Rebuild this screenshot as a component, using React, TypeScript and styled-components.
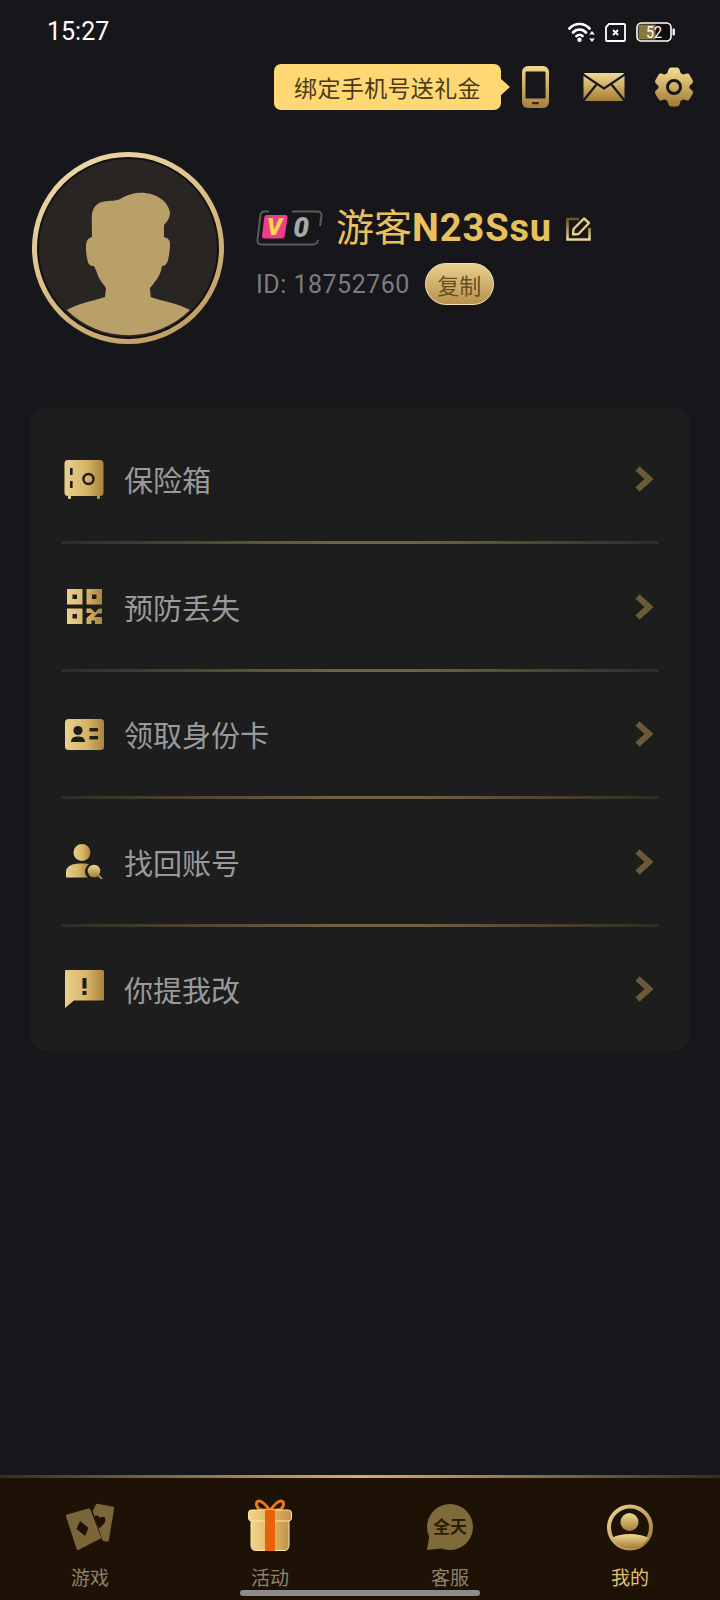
import React from 'react';
import styled, { createGlobalStyle } from 'styled-components';

const GlobalStyle = createGlobalStyle`
  html, body {
    margin: 0;
    padding: 0;
    background: #17161a;
  }
  body {
    font-family: Roboto, "Noto Sans CJK SC", sans-serif;
  }
`;

const Page = styled.div`
  position: relative;
  width: 720px;
  height: 1600px;
  overflow: hidden;
  display: flex;
  flex-direction: column;
  background: #17161a;
`;

const StatusBar = styled.div`
  height: 64px;
  box-sizing: border-box;
  padding: 18px 45px 0 47px;
  display: flex;
  justify-content: space-between;
  align-items: flex-start;
`;

const Time = styled.span`
  font-size: 25px;
  line-height: 28px;
  color: #fff;
`;

const StatusIcons = styled.div`
  display: flex;
  align-items: center;
  gap: 10px;
  height: 28px;
`;

const ActionBar = styled.div`
  height: 46px;
  padding-right: 26px;
  display: flex;
  justify-content: flex-end;
  align-items: center;
`;

const Tip = styled.div`
  position: relative;
  height: 46px;
  width: 227px;
  box-sizing: border-box;
  margin-right: 21px;
  border-radius: 7px;
  background: #ffd873;
  color: #4a3a18;
  font-size: 23px;
  letter-spacing: 0.35px;
  display: flex;
  align-items: center;
  justify-content: center;

  &::after {
    content: '';
    position: absolute;
    right: -9px;
    top: 14px;
    width: 0;
    height: 0;
    border-top: 9px solid transparent;
    border-bottom: 9px solid transparent;
    border-left: 10px solid #ffd873;
  }
`;

const ActionIcon = styled.span<{ $w: number; $ml?: number }>`
  width: ${({ $w }) => $w}px;
  margin-left: ${({ $ml }) => $ml ?? 0}px;
  display: flex;
  justify-content: center;
`;

const Profile = styled.section`
  margin-top: 42px;
  padding-left: 32px;
  height: 256px;
  display: flex;
  align-items: flex-start;
  gap: 32px;
`;

const AvatarRing = styled.div`
  width: 192px;
  height: 192px;
  box-sizing: border-box;
  padding: 5px;
  border-radius: 50%;
  background: linear-gradient(150deg, #f0deb0 0%, #dcc088 45%, #b8955a 100%);
`;

const AvatarInner = styled.div`
  width: 100%;
  height: 100%;
  box-sizing: border-box;
  border: 2px solid #111013;
  border-radius: 50%;
  background: #282523;
  overflow: hidden;
  display: flex;
`;

const Info = styled.div`
  padding-top: 54px;
  display: flex;
  flex-direction: column;
`;

const NameRow = styled.div`
  display: flex;
  align-items: center;
  height: 44px;
`;

const Name = styled.span`
  margin-left: 13px;
  font-size: 38px;
  line-height: 44px;
  font-weight: 700;
  letter-spacing: 0.9px;
  color: #e8c15e;
  white-space: nowrap;
`;

const NameCjk = styled.span`
  font-weight: 400;
  letter-spacing: 0;
`;

const EditIcon = styled.span`
  display: flex;
  margin-left: 14px;
`;

const IdRow = styled.div`
  margin-top: 13px;
  display: flex;
  align-items: center;
  gap: 15px;
`;

const IdText = styled.span`
  font-size: 25px;
  letter-spacing: 0.5px;
  color: #7c7c80;
`;

const CopyPill = styled.span`
  width: 69px;
  height: 42px;
  box-sizing: border-box;
  border-radius: 21px;
  border: 1px solid #f3e2b4;
  background: linear-gradient(180deg, #e9cf8e 0%, #b8924e 100%);
  color: #6a4d20;
  font-size: 22px;
  display: flex;
  align-items: center;
  justify-content: center;
`;

const Panel = styled.section`
  margin: 0 30px;
  padding: 10px 0 1px;
  border-radius: 16px;
  background: #1d1d1e;
`;

const Row = styled.div`
  height: 122px;
  box-sizing: border-box;
  padding: 0 37px 0 34px;
  display: flex;
  align-items: center;
`;

const RowIcon = styled.span`
  width: 40px;
  height: 40px;
  display: flex;
  align-items: center;
  justify-content: center;
`;

const RowLabel = styled.span`
  flex: 1;
  margin-left: 20px;
  font-size: 29px;
  color: #9a9a9a;
`;

const Divider = styled.div`
  height: 3px;
  margin: 1.25px 31px;
  background: linear-gradient(90deg, #2f2b25 0%, #6f6146 45%, #6f6146 60%, #2f2b25 100%);
`;

const Spacer = styled.div`
  flex: 1;
`;

const TabBar = styled.nav`
  height: 125px;
  box-sizing: border-box;
  border-top: 3px solid transparent;
  border-image: linear-gradient(90deg, #2f2d2c 0%, #d8b066 50%, #2f2d2c 100%) 1;
  background: #1e1207;
  display: grid;
  grid-template-columns: repeat(4, 180px);
`;

const Tab = styled.div<{ $active?: boolean }>`
  display: flex;
  flex-direction: column;
  align-items: center;
  padding-top: 24px;
  color: ${({ $active }) => ($active ? '#e0c070' : '#8f826a')};
  font-size: 19px;
`;

const TabIcon = styled.span`
  height: 50px;
  display: flex;
  align-items: center;
`;

const TabLabel = styled.span`
  margin-top: 14px;
  line-height: 26px;
`;

const HomeBar = styled.div`
  position: absolute;
  left: 240px;
  bottom: 4px;
  width: 240px;
  height: 6px;
  border-radius: 3px;
  background: #8f8b88;
`;

const SharedDefs = () => (
  <svg width="0" height="0" style={{ position: 'absolute' }} aria-hidden="true">
    <defs>
      <linearGradient id="goldH" x1="0" y1="0" x2="1" y2="0">
        <stop offset="0" stopColor="#e8d08e" />
        <stop offset="0.55" stopColor="#d6b568" />
        <stop offset="1" stopColor="#a9843c" />
      </linearGradient>
      <linearGradient id="goldV" x1="0" y1="0" x2="0" y2="1">
        <stop offset="0" stopColor="#f0d890" />
        <stop offset="1" stopColor="#a67f38" />
      </linearGradient>
      <linearGradient id="goldD" x1="0" y1="0" x2="1" y2="1">
        <stop offset="0" stopColor="#ecd492" />
        <stop offset="1" stopColor="#a27a34" />
      </linearGradient>
      <linearGradient id="boxFade" x1="0" y1="0" x2="0" y2="1">
        <stop offset="0" stopColor="#6e5528" />
        <stop offset="1" stopColor="#ecd79c" />
      </linearGradient>
      <linearGradient id="giftBody" x1="0" y1="0" x2="1" y2="0">
        <stop offset="0" stopColor="#f2d48a" />
        <stop offset="0.5" stopColor="#e0b868" />
        <stop offset="1" stopColor="#c2924a" />
      </linearGradient>
    </defs>
  </svg>
);

const WifiIcon = () => (
  <svg width="27" height="20" viewBox="0 0 27 20">
    <g fill="none" stroke="#fff" strokeWidth="2.7" strokeLinecap="round">
      <path d="M1.500 6.500 C7 0.500 16 0.500 21.500 6.500" />
      <path d="M5 10.500 C8.500 6.500 14.500 6.500 18 10.500" />
      <path d="M8.500 14 C10.200 12.400 12.800 12.400 14.500 14" />
    </g>
    <circle cx="11.500" cy="17.800" r="2.200" fill="#fff" />
    <path d="M24 9 l2.800 3.500 h-5.600 z M24 20 l2.800 -3.500 h-5.600 z" fill="#fff" />
  </svg>
);

const SimIcon = () => (
  <svg width="21" height="19" viewBox="0 0 21 19">
    <path d="M4 1 H19 a1 1 0 0 1 1 1 V17 a1 1 0 0 1 -1 1 H2 a1 1 0 0 1 -1 -1 V4 z" fill="none" stroke="#fff" strokeWidth="1.8" />
    <path d="M8 7 l5 5 M13 7 l-5 5" stroke="#fff" strokeWidth="1.9" />
  </svg>
);

const BatteryIcon = () => (
  <svg width="39" height="20" viewBox="0 0 39 20">
    <rect x="1" y="1" width="34" height="18" rx="4.500" fill="#0e0d0f" stroke="#fff" strokeWidth="1.600" />
    <path d="M3.500 2.500 H19.500 V17.500 H3.500 a1.500 1.500 0 0 1 -1 -1.500 V4 a1.500 1.500 0 0 1 1 -1.500 z" fill="#8a7740" />
    <rect x="36.500" y="6.500" width="2.400" height="7" rx="1" fill="#fff" />
    <text x="18" y="16" fontSize="17" fill="#fff" textAnchor="middle" fontFamily="Roboto, sans-serif" textLength="16" lengthAdjust="spacingAndGlyphs">52</text>
  </svg>
);

const PhoneIcon = () => (
  <svg width="27" height="42" viewBox="0 0 27 42">
    <rect width="27" height="42" rx="6" fill="url(#goldV)" />
    <rect x="3.500" y="5.500" width="20" height="27" rx="1" fill="#17161a" />
    <rect x="10" y="36" width="7" height="2.200" rx="1" fill="#33280f" />
  </svg>
);

const MailIcon = () => (
  <svg width="42" height="30" viewBox="0 0 42 30">
    <rect x="0.500" y="1" width="41" height="28" rx="1.500" fill="url(#goldV)" />
    <g fill="none" stroke="#17161a" strokeWidth="2.200">
      <path d="M0 2.500 L21 16.500 L42 2.500" />
      <path d="M0.500 28.500 L13.500 12.500 M41.500 28.500 L28.500 12.500" />
    </g>
  </svg>
);

const GearIcon = () => (
  <svg width="40" height="40" viewBox="0 0 40 40">
    <path
      fill="url(#goldV)"
      stroke="url(#goldV)"
      strokeWidth="5"
      strokeLinejoin="round"
      d="M17 3 H23 L24.800 8 L29 10.300 L33.300 9 L36.500 14.500 L33 18 V22 L36.500 25.500 L33.300 31 L29 29.700 L24.800 32 L23 37 H17 L15.200 32 L11 29.700 L6.700 31 L3.500 25.500 L7 22 V18 L3.500 14.500 L6.700 9 L11 10.300 L15.200 8 Z"
    />
    <circle cx="20" cy="20" r="6.500" fill="none" stroke="#17161a" strokeWidth="3" />
  </svg>
);

const Silhouette = () => (
  <svg width="178" height="178" viewBox="7 7 178 178">
    <path
      fill="#b8a068"
      d="M60 85 L59.700 65 C60 55 66 50 72 49.500 C78 48.500 84 49 88 47 C96 42 104 40.500 110 40.700 C122 41 135 47 138 60 C138 66 135 70 132 73 L132 85 C136 86 138 88 138 92 C138 98 137 104 136 108 C135 112 133 114 130 114 C129 120 127 124 125 127 C122 131 120 134 118 136 L118.700 145 C130 149 148 152 158 158 A88 88 0 0 1 34.700 158 C45 152 60 149 73 145 L74 136 C70 131 66 125 65 121 C64 118 63 116 62 114 C58 114 56 112 55.500 108 C54 103 54 98 54 94 C54 89 56 86 60 85 Z"
    />
  </svg>
);

const VipBadge = () => (
  <svg width="67" height="36" viewBox="0 0 67 36">
    <g fill="none" stroke="#5a5b5e" strokeWidth="2">
      <path d="M13 1.500 H9 Q5 1.500 4.500 5 L1.500 30 Q1 34.500 5.500 34.500 H57 Q61.500 34.500 62 30" />
      <path d="M36 1.500 H61 Q66 1.500 65.500 6 L64 16" />
    </g>
    <path d="M11 5 H29 Q32 5 31.500 8 L28.800 25.500 Q28.300 28.500 25.500 28.500 H8.500 Q5.500 28.500 6 25.500 L8.200 8 Q8.600 5 11 5 Z" fill="#ee3d8e" />
    <text x="18.500" y="25" fontSize="24" fontWeight="900" fontStyle="italic" fill="#ffd44f" textAnchor="middle" fontFamily="Roboto, sans-serif">V</text>
    <text x="45" y="27" fontSize="28" fontWeight="900" fontStyle="italic" fill="#a8a8aa" textAnchor="middle" fontFamily="Roboto, sans-serif">0</text>
  </svg>
);

const PencilIcon = () => (
  <svg width="25" height="25" viewBox="0 0 25 25">
    <path d="M13 3 H1.500 V23.500 H23.500 V12" fill="none" stroke="url(#boxFade)" strokeWidth="2.600" />
    <path d="M7.500 13 L18 2.500 L23 7 L12.500 18 L7 18.500 Z" fill="none" stroke="#e6cd8c" strokeWidth="2.400" strokeLinejoin="round" />
  </svg>
);

const SafeIcon = () => (
  <svg width="40" height="39" viewBox="0 0 40 39">
    <path d="M4 0 H36 a3.500 3.500 0 0 1 3.500 3.500 V32.500 a3.500 3.500 0 0 1 -3.500 3.500 V38 a1 1 0 0 1 -1 1 H34 a1 1 0 0 1 -1 -1 V36 H7 V38 a1 1 0 0 1 -1 1 H5 a1 1 0 0 1 -1 -1 V36 a3.500 3.500 0 0 1 -3.500 -3.500 V3.500 A3.500 3.500 0 0 1 4 0 Z" fill="url(#goldH)" />
    <rect x="6" y="8" width="2.600" height="7" fill="#1d1d1e" />
    <rect x="6" y="21" width="2.600" height="7" fill="#1d1d1e" />
    <circle cx="24.500" cy="19" r="5" fill="none" stroke="#1d1d1e" strokeWidth="2.400" />
  </svg>
);

const QrIcon = () => (
  <svg width="35" height="35" viewBox="0 0 35 35">
    <path
      fill="url(#goldH)"
      fillRule="evenodd"
      d="M0 0 H15.500 V15.500 H0 Z M5.500 5.500 V10 H10 V5.500 Z M19.500 0 H35 V15.500 H19.500 Z M25 5.500 V10 H29.500 V5.500 Z M0 19.500 H15.500 V35 H0 Z M5.500 25 V29.500 H10 V25 Z M19.500 19.500 H24 L28 23.500 L32 19.500 H35 V24.500 H30.500 L27 28 H35 V35 H28 V31.500 H24.500 V35 H19.500 V29 L25 24 H19.500 Z"
    />
  </svg>
);

const IdCardIcon = () => (
  <svg width="39" height="31" viewBox="0 0 39 31">
    <rect width="39" height="31" rx="3.500" fill="url(#goldH)" />
    <circle cx="13" cy="11.500" r="4.600" fill="#1d1d1e" />
    <path d="M6 23 C6 18.500 9.500 17.500 13 17.500 C16.500 17.500 20 18.500 20 23 Z" fill="#1d1d1e" />
    <rect x="24.500" y="9" width="8.500" height="3.400" fill="#1d1d1e" />
    <rect x="24.500" y="17" width="8.500" height="3.400" fill="#1d1d1e" />
  </svg>
);

const FindUserIcon = () => (
  <svg width="37" height="35" viewBox="0 0 37 35">
    <circle cx="16" cy="8.500" r="8.500" fill="url(#goldH)" />
    <path d="M0 33.500 V28 C0 22 6 19.500 16 19.500 C20 19.500 22 20 23 20.500 C20 22 19 25 19 27.500 C19 30 20 32 22 33.500 Z" fill="url(#goldH)" />
    <circle cx="28" cy="27" r="6.300" fill="url(#goldV)" />
    <path d="M32.500 31.500 L36 35" stroke="#b8924e" strokeWidth="1.800" />
  </svg>
);

const FeedbackIcon = () => (
  <svg width="39" height="38" viewBox="0 0 39 38">
    <path d="M1 0 H37.500 a1.500 1.500 0 0 1 1.500 1.500 V29 a1.500 1.500 0 0 1 -1.500 1.500 H9 L0 38 V1 a1 1 0 0 1 1 -1 Z" fill="url(#goldH)" />
    <rect x="17.500" y="8" width="4" height="10.500" fill="#1d1d1e" />
    <rect x="17.500" y="21" width="4" height="4" fill="#1d1d1e" />
  </svg>
);

const Chevron = () => (
  <svg width="18" height="26" viewBox="0 0 18 26">
    <path d="M2.500 2.500 L14 13 L2.500 23.500" fill="none" stroke="#6a5a38" strokeWidth="6" />
  </svg>
);

const CardsIcon = () => (
  <svg width="50" height="50" viewBox="0 0 50 50">
    <path d="M32 3 L48 6 L42.500 38.500 L38.500 37.500 L29 9 Z" fill="#7a6638" stroke="#7a6638" strokeWidth="2.500" strokeLinejoin="round" />
    <path d="M29 15 C31 12.500 34 13.500 35 16 C37 14 40.500 14.500 40.500 18 C40.500 21 37 24 34 26.500 Z" fill="#1e1207" />
    <path d="M2.500 14 L24 8 L34.500 35.500 L13 46.500 Z" fill="#7a6638" stroke="#7a6638" strokeWidth="3" strokeLinejoin="round" />
    <path d="M15 19 L23.500 26 L20 34 L11.500 27 Z" fill="#1e1207" />
  </svg>
);

const GiftIcon = () => (
  <svg width="44" height="56" viewBox="0 0 44 56">
    <path d="M21.500 11 C16 3.500 12 1 9.500 2.500 C7.500 4 8.500 9 12 10.500 C15 11.500 18 11.500 21.500 11 Z M22.500 11 C28 3.500 32 1 34.500 2.500 C36.500 4 35.500 9 32 10.500 C29 11.500 26 11.500 22.500 11 Z" fill="none" stroke="#e8781a" strokeWidth="3" />
    <path d="M3 20 H41 V46 Q41 51.500 36 51.500 H8 Q3 51.500 3 46 Z" fill="url(#giftBody)" stroke="#fbeab0" strokeWidth="1" />
    <rect x="0.500" y="11" width="43" height="11" rx="3" fill="url(#giftBody)" stroke="#fbe7ac" strokeWidth="1" />
    <rect x="17" y="11" width="10" height="41" fill="#e8620a" />
  </svg>
);

const ChatIcon = () => (
  <svg width="46" height="46" viewBox="0 0 46 46">
    <circle cx="23" cy="23" r="23" fill="#7f6a3a" />
    <path d="M3 28 L0 46 L18 44 Z" fill="#7f6a3a" />
    <text x="23" y="28.500" fontSize="17" fontWeight="700" fill="#2b1e08" textAnchor="middle" fontFamily="'Noto Sans CJK SC', sans-serif">全天</text>
  </svg>
);

const MeIcon = () => (
  <svg width="46" height="47" viewBox="0 0 46 47">
    <circle cx="23" cy="23.500" r="21" fill="none" stroke="url(#goldD)" strokeWidth="4" />
    <circle cx="22.500" cy="18" r="9" fill="url(#goldV)" />
    <path d="M5 34 C10 31 16 30 23 30 C30 30 36 31 41 34 A21 21 0 0 1 5 34 Z" fill="url(#goldV)" />
  </svg>
);

const menuItems = [
  { label: '保险箱', icon: <SafeIcon /> },
  { label: '预防丢失', icon: <QrIcon /> },
  { label: '领取身份卡', icon: <IdCardIcon /> },
  { label: '找回账号', icon: <FindUserIcon /> },
  { label: '你提我改', icon: <FeedbackIcon /> },
];

const tabs = [
  { label: '游戏', icon: <CardsIcon /> },
  { label: '活动', icon: <GiftIcon /> },
  { label: '客服', icon: <ChatIcon /> },
  { label: '我的', icon: <MeIcon />, active: true },
];

export default function App() {
  return (
    <Page>
      <GlobalStyle />
      <SharedDefs />
      <StatusBar>
        <Time>15:27</Time>
        <StatusIcons>
          <WifiIcon />
          <SimIcon />
          <BatteryIcon />
        </StatusIcons>
      </StatusBar>
      <ActionBar>
        <Tip>绑定手机号送礼金</Tip>
        <ActionIcon $w={27}>
          <PhoneIcon />
        </ActionIcon>
        <ActionIcon $w={42} $ml={34}>
          <MailIcon />
        </ActionIcon>
        <ActionIcon $w={40} $ml={29}>
          <GearIcon />
        </ActionIcon>
      </ActionBar>
      <Profile>
        <AvatarRing>
          <AvatarInner>
            <Silhouette />
          </AvatarInner>
        </AvatarRing>
        <Info>
          <NameRow>
            <VipBadge />
            <Name>
              <NameCjk>游客</NameCjk>N23Ssu
            </Name>
            <EditIcon>
              <PencilIcon />
            </EditIcon>
          </NameRow>
          <IdRow>
            <IdText>ID: 18752760</IdText>
            <CopyPill>复制</CopyPill>
          </IdRow>
        </Info>
      </Profile>
      <Panel>
        {menuItems.map((item, i) => (
          <React.Fragment key={item.label}>
            {i > 0 && <Divider />}
            <Row>
              <RowIcon>{item.icon}</RowIcon>
              <RowLabel>{item.label}</RowLabel>
              <Chevron />
            </Row>
          </React.Fragment>
        ))}
      </Panel>
      <Spacer />
      <TabBar>
        {tabs.map((tab) => (
          <Tab key={tab.label} $active={tab.active}>
            <TabIcon>{tab.icon}</TabIcon>
            <TabLabel>{tab.label}</TabLabel>
          </Tab>
        ))}
      </TabBar>
      <HomeBar />
    </Page>
  );
}
